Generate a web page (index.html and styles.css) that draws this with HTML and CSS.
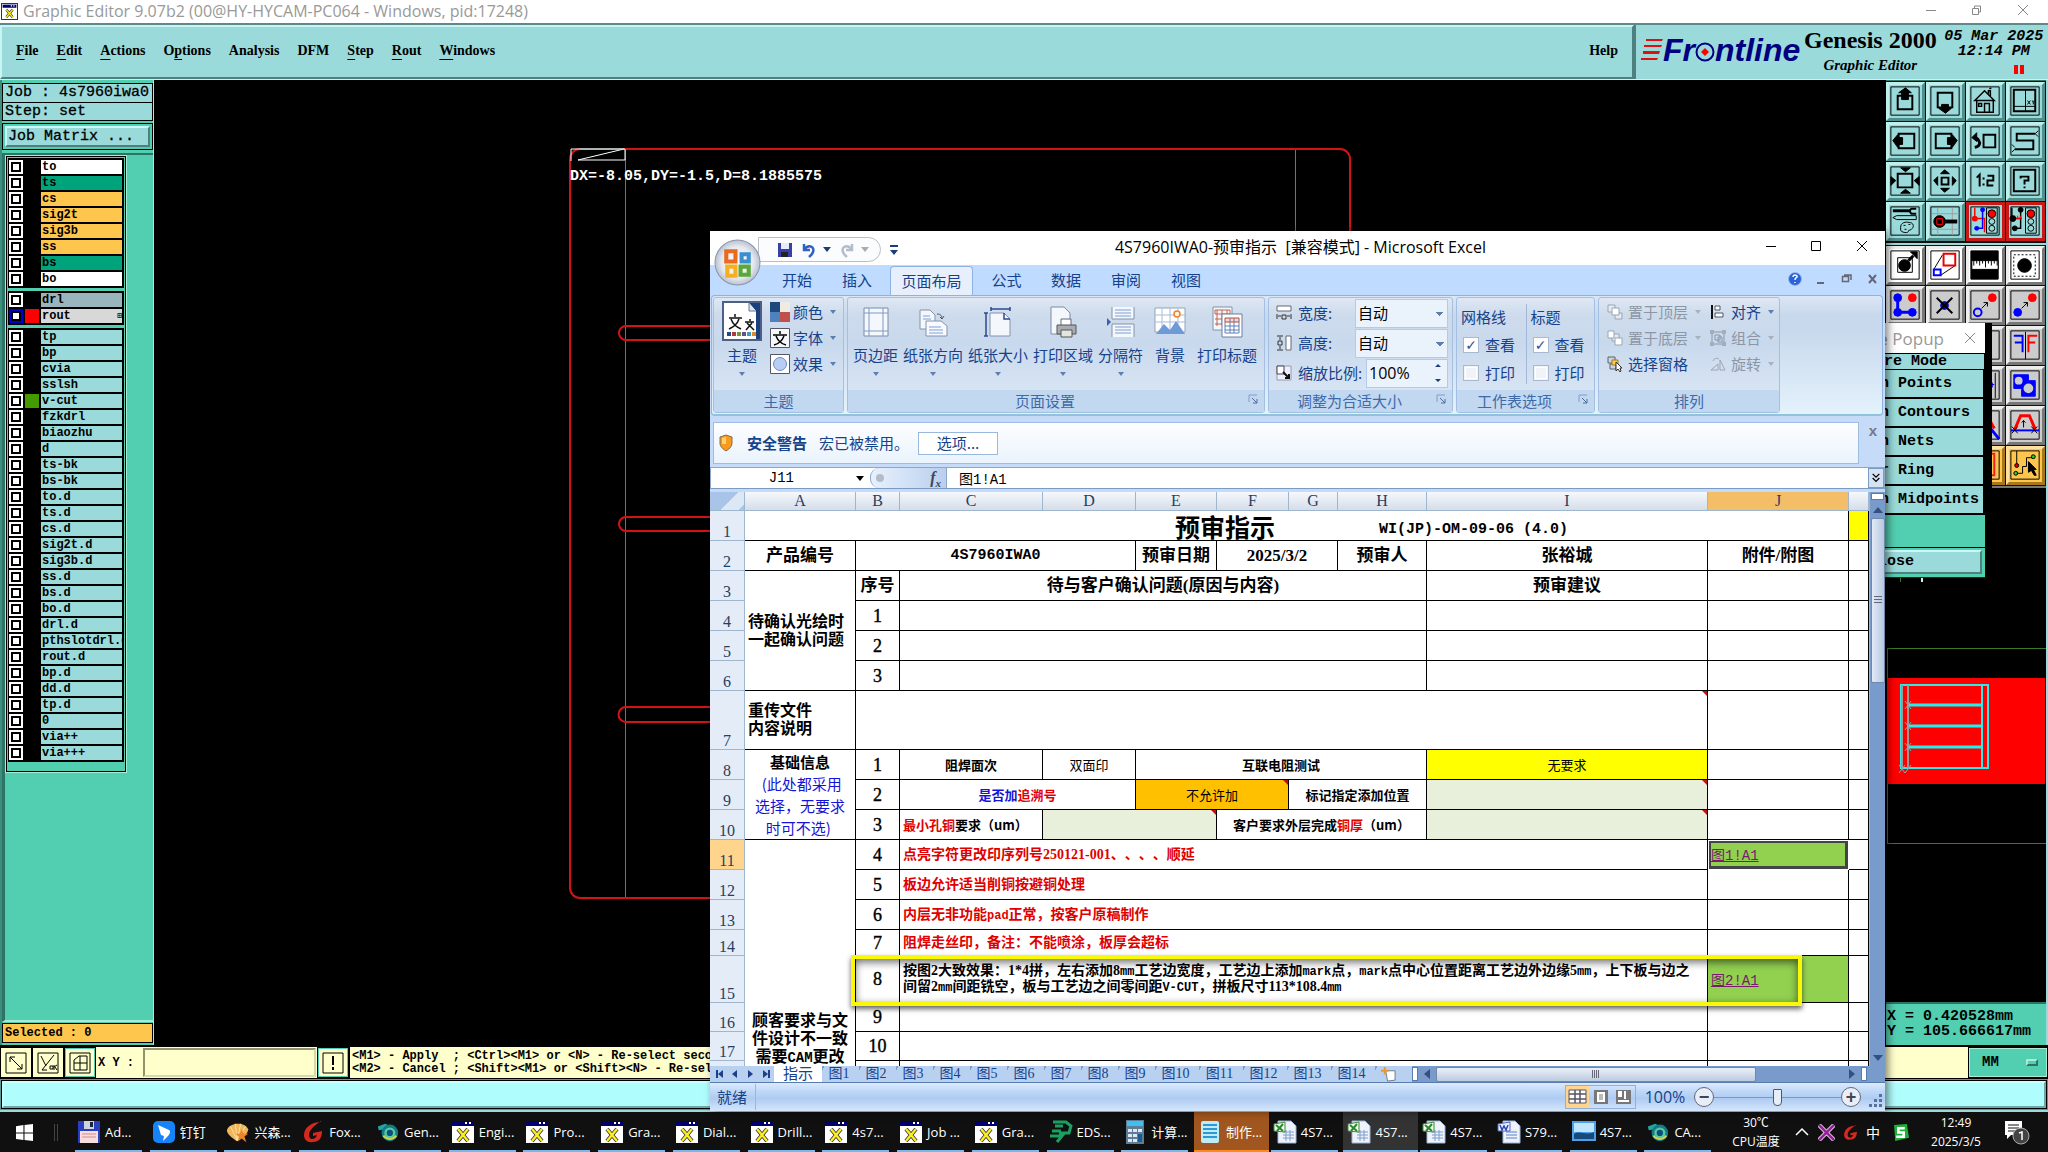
FILE: index.html
```html
<!DOCTYPE html>
<html lang="zh-CN">
<head>
<meta charset="utf-8">
<title>Graphic Editor</title>
<link rel="stylesheet" href="styles.css">
</head>
<body>
<svg class="defs" aria-hidden="true">
  <symbol id="xapp" viewBox="0 0 24 24"><path d="M1 1h22v22H1z" fill="#fff"/><path d="M1 1h22v5H1z" fill="#00006e"/><path d="M14 3h2M18 3h2" stroke="#fff" stroke-width="2"/><path d="M7 9l10 12M17 9L7 21" stroke="#333" stroke-width="4"/><path d="M7 9l10 12M17 9L7 21" stroke="#ffee22" stroke-width="2.4"/></symbol>
  <symbol id="xls" viewBox="0 0 24 24"><path d="M5 1h13l5 5v17H5z" fill="#eef3fb" stroke="#9fb4d6"/><path d="M10 12h11M10 15h11M10 18h11M13 10v11M17 10v11" stroke="#7f9cc8"/><path d="M1 4l11-2v10L1 11z" fill="#f3f8f0" stroke="#3b8a3b"/><path d="M3 5l7 6M10 4l-6 7" stroke="#2a8a2a" stroke-width="2"/></symbol>
  <symbol id="gen" viewBox="0 0 26 24"><path d="M2 6l8-3 4 2-3 4-8 1z" fill="#23a5a0"/><circle cx="15" cy="13" r="9" fill="#147a86"/><circle cx="15" cy="13" r="6" fill="#58c9a0"/><circle cx="15" cy="13" r="3.4" fill="#0b4f7c"/><path d="M8 16c4 5 10 5 14 0" stroke="#d7d04a" stroke-width="2" fill="none"/></symbol>
  <symbol id="fox" viewBox="0 0 24 24"><path d="M20 2C10 2 3 8 3 15c0 5 4 8 9 7 6 0 9-4 9-11l-9 2v3l4-1c-1 3-3 4-5 4-2 0-3-2-3-4 0-5 5-9 12-14z" fill="#d8281e"/></symbol>
  <symbol id="launch" viewBox="0 0 12 12"><path d="M1 8V1h8" fill="none" stroke="#7f9ec8"/><path d="M4 4l5 5M9 5v4H5" fill="none" stroke="#4d6c9c"/></symbol>
</svg>

<header class="titlebar">
  <svg class="tico"><use href="#xapp"/></svg>
  <span class="ttext">Graphic Editor 9.07b2 (00@HY-HYCAM-PC064 - Windows, pid:17248)</span>
  <svg class="wctl" width="110" height="23" fill="none" stroke="#888"><path d="M8 10.500h10M54.500 8.500h6v6h-6zM56.500 8v-2h6v6h-2M100 5l10 10M110 5l-10 10"/></svg>
</header>

<nav class="menubar">
  <div class="menus">
    <a href="#"><u>F</u>ile</a><a href="#"><u>E</u>dit</a><a href="#"><u>A</u>ctions</a><a href="#">O<u>p</u>tions</a><a href="#">Analysis</a><a href="#">DFM</a><a href="#"><u>S</u>tep</a><a href="#"><u>R</u>out</a><a href="#"><u>W</u>indows</a><a href="#" class="help">Help</a>
  </div>
  <div class="brand">
    <div class="logo">
      <svg width="22" height="26" fill="#e01010"><path d="M5 2h17l-1 2H5zM3 8h18l-1 2H3zM2 14h17l-1 3H2zM0 21h17l-1 2H0z"/></svg>
      <span>Fr</span><svg class="o" width="20" height="26"><circle cx="10" cy="15" r="8.500" fill="none" stroke="#000080" stroke-width="2"/><path d="M10 11l4 4-4 4-4-4z" fill="#f00"/></svg><span>ntline</span>
    </div>
    <div class="product"><b>Genesis 2000</b><i>Graphic Editor</i></div>
    <div class="date"><span>05 Mar 2025</span><span>12:14 PM</span><em></em></div>
  </div>
</nav>

<main class="work">
  <aside class="side">
    <div class="jobbox">
      <div class="jobline">Job : 4s7960iwa0</div>
      <div class="jobline">Step: set</div>
    </div>
    <div class="jobbtn"><button>Job Matrix ...</button></div>
    <div class="well">
      <div class="layers">
        <ul>
          <li><i></i><s></s><b class="w">to</b></li><li><i></i><s></s><b class="g">ts</b></li><li><i></i><s></s><b class="o">cs</b></li><li><i></i><s></s><b class="o">sig2t</b></li><li><i></i><s></s><b class="o">sig3b</b></li><li><i></i><s></s><b class="o">ss</b></li><li><i></i><s></s><b class="g">bs</b></li><li><i></i><s></s><b class="w">bo</b></li>
        </ul>
        <ul>
          <li><i></i><s></s><b class="d">drl</b></li><li><i class="on"></i><s class="red"></s><b class="l">rout<small>⊞</small></b></li>
        </ul>
        <ul>
          <li><i></i><s></s><b>tp</b></li><li><i></i><s></s><b>bp</b></li><li><i></i><s></s><b>cvia</b></li><li><i></i><s></s><b>sslsh</b></li><li><i></i><s class="grn"></s><b>v-cut</b></li><li><i></i><s></s><b>fzkdrl</b></li><li><i></i><s></s><b>biaozhu</b></li><li><i></i><s></s><b>d</b></li><li><i></i><s></s><b>ts-bk</b></li><li><i></i><s></s><b>bs-bk</b></li><li><i></i><s></s><b>to.d</b></li><li><i></i><s></s><b>ts.d</b></li><li><i></i><s></s><b>cs.d</b></li><li><i></i><s></s><b>sig2t.d</b></li><li><i></i><s></s><b>sig3b.d</b></li><li><i></i><s></s><b>ss.d</b></li><li><i></i><s></s><b>bs.d</b></li><li><i></i><s></s><b>bo.d</b></li><li><i></i><s></s><b>drl.d</b></li><li><i></i><s></s><b>pthslotdrl.d</b></li><li><i></i><s></s><b>rout.d</b></li><li><i></i><s></s><b>bp.d</b></li><li><i></i><s></s><b>dd.d</b></li><li><i></i><s></s><b>tp.d</b></li><li><i></i><s></s><b>0</b></li><li><i></i><s></s><b>via++</b></li><li><i></i><s></s><b>via+++</b></li>
        </ul>
      </div>
    </div>
    <div class="selected">Selected : 0</div>
  </aside>

  <svg class="canvas" fill="none">
    <path d="M471.500 69v749M1141.500 69v749" stroke="#4a9a1a"/>
    <rect x="416" y="69" width="780" height="749" rx="10" stroke="#d21414" stroke-width="2"/>
    <path d="M702 246H472a7 7 0 0 0 0 14h230M702 437H472a7 7 0 0 0 0 14h230M702 627H472a7 7 0 0 0 0 15h230" stroke="#d21414" stroke-width="2"/>
    <path d="M417 81V69h54v11h-47l46-11" stroke="#fff"/><path d="M426 69h44" stroke="#6fdede"/>
    <text x="416" y="100">DX=-8.05,DY=-1.5,D=8.1885575</text>
  </svg>

  <aside class="right">
    <div class="tools teal">
      <button><svg viewBox="0 0 40 40"><path d="M5 5h29v29H5z"/><path d="M12 14h15v14H12z" stroke-width="2"/><path d="M20 6l6 5h-3v7h-7v-7h-3z" fill="#000"/></svg></button>
      <button><svg viewBox="0 0 40 40"><path d="M5 5h29v29H5z"/><path d="M12 11h15v15H12z" stroke-width="2"/><path d="M20 32l6-5h-3v-4h-7v4h-3z" fill="#000"/></svg></button>
      <button><svg viewBox="0 0 40 40"><path d="M5 5h29v29H5z"/><path d="M9 19L19 9l10 10zM11 19h17v12H11zM19 31v-9h5v9M13 22h3v3h-3zM23 12V9h2v6M24 7l2-1" stroke-width="1.500"/></svg></button>
      <button><svg viewBox="0 0 40 40"><path d="M5 5h29v29H5z"/><path d="M8 8h22v22H8z" stroke-width="2"/><path d="M20 8v22M8 25h22M22 19l3 4M25 19l-3 4M27 19l1 2 1-2M28 21v2"/></svg></button>
      <button><svg viewBox="0 0 40 40"><path d="M5 5h29v29H5z"/><path d="M13 12h16v15H13z" stroke-width="2"/><path d="M7 19l5-6v3h5v7h-5v3z" fill="#000"/></svg></button>
      <button><svg viewBox="0 0 40 40"><path d="M5 5h29v29H5z"/><path d="M10 12h16v15H10z" stroke-width="2"/><path d="M32 19l-5-6v3h-5v7h5v3z" fill="#000"/></svg></button>
      <button><svg viewBox="0 0 40 40"><path d="M5 5h29v29H5z"/><path d="M18 13h12v13H18z" stroke-width="2"/><path d="M9 26c5-1 6-4 4-7-1-2-2-3-4-3" stroke-width="3"/><path d="M6 16l5-5v9z" fill="#000"/></svg></button>
      <button><svg viewBox="0 0 40 40"><path d="M5 5h29v29H5z"/><path d="M30 12H11v7h17v9H9" stroke-width="2"/><path d="M30 12l3-3M30 12l3 3M9 26l-3-3M9 28l-3 3"/></svg></button>
      <button><svg viewBox="0 0 40 40"><path d="M5 5h29v29H5z"/><path d="M12 12h15v14H12z" stroke-width="2"/><path d="M20 10l-5-4h10zM20 28l-5 4h10zM10 19l-5-4v9zM29 19l5-4v9z" fill="#000"/></svg></button>
      <button><svg viewBox="0 0 40 40"><path d="M5 5h29v29H5z"/><path d="M16 16h7v7h-7z" stroke-width="2"/><path d="M19 8l-4 4h9zM19 31l-4-4h9zM8 19l4-4v9zM31 19l-4-4v9z" fill="#000"/></svg></button>
      <button><svg viewBox="0 0 40 40"><path d="M5 5h29v29H5z"/><path d="M11 16l3-3v12M18 16v2M18 22v2M22 14h6v5h-6v5h6" stroke-width="2"/></svg></button>
      <button><svg viewBox="0 0 40 40"><path d="M5 5h29v29H5z"/><path d="M8 8h22v22H8z" stroke-width="2"/><path d="M15 17v-2h8v4h-4v4M19 25v2" stroke-width="2"/></svg></button>
      <button><svg viewBox="0 0 40 40"><path d="M5 5h29v29H5z"/><path d="M7 9h18" stroke-width="3"/><path d="M31 7h-5l-2 2 2 3h5" stroke-width="2"/><path d="M7 16l4-2h20v4H11zM15 26c0-5 5-6 9-5 4 0 5 4 3 6-2 3-4 1-4 3s-6 2-8-1zM18 24h2M23 23h2M19 28h2"/></svg></button>
      <button><svg viewBox="0 0 40 40"><path d="M5 5h29v29H5z"/><path d="M12 6v28M27 6v28M6 12h28M6 28h28" stroke="#aa9a9a"/><circle cx="14" cy="20" r="6" fill="#000"/><path d="M20 20h12" stroke-width="4"/><path d="M11 17h6v6h-6z" stroke="#f00"/></svg></button>
      <button class="redb"><svg viewBox="0 0 40 40"><path d="M5 5h29v29H5z"/><path d="M9 6v11M10 17h9v14" stroke="#f00" stroke-width="1.500"/><path d="M17 8v19h-6" stroke="#00f" stroke-width="1.500"/><circle cx="9" cy="17" r="3" fill="#f00" stroke="none"/><circle cx="17" cy="8" r="2.500" fill="#00f" stroke="none"/><circle cx="11" cy="27" r="2.500" fill="#00f" stroke="none"/><path d="M21 6h11v26H21z"/><circle cx="26.500" cy="12" r="4" fill="#f00"/><circle cx="26.500" cy="20" r="3"/><circle cx="26.500" cy="27" r="3"/></svg></button>
      <button class="redb"><svg viewBox="0 0 40 40"><path d="M5 5h29v29H5z"/><path d="M6 6v11M7 17h9M15 8v19h-6" stroke-width="1.500"/><path d="M9 17v-3M12 17v-3M15 17v-3M9 17h6" stroke="#f00"/><circle cx="7" cy="17" r="3" fill="#000"/><circle cx="15" cy="8" r="2.500" fill="#000"/><circle cx="9" cy="27" r="2.500" fill="#000"/><path d="M20 6h11v26H20z"/><circle cx="25.500" cy="12" r="4" fill="#f00"/><circle cx="25.500" cy="20" r="3"/><circle cx="25.500" cy="27" r="3"/></svg></button>
    </div>
    <div class="tools gray">
      <button class="wt"><svg viewBox="0 0 40 40"><path d="M5 5h29v29H5z"/><path d="M12 12h15v15H12z"/><circle cx="19" cy="20" r="6" fill="#000"/><path d="M23 15l5-5" stroke-width="3"/><path d="M32 6v7l-7-7z" fill="#000"/></svg></button>
      <button class="wt"><svg viewBox="0 0 40 40"><path d="M5 5h29v29H5z"/><path d="M17 9L8 24M30 20l-15 10"/><path d="M18 8h12v12H18z" stroke="#e00" stroke-width="2"/><path d="M8 24h7v6H8z" stroke="#00f" stroke-width="2"/></svg></button>
      <button class="wt"><svg viewBox="0 0 40 40"><path d="M5 5h28v29H5z" fill="#000"/><path d="M6 15h27v9H6z" fill="#fff"/><path d="M8 15v5M11 15v3M14 15v5M17 15v3M20 15v7M23 15v3M26 15v5M29 15v3M32 15v5"/></svg></button>
      <button class="wt"><svg viewBox="0 0 40 40"><path d="M5 5h29v29H5z"/><path d="M8 9h22v22H8z" stroke-dasharray="2 2"/><circle cx="19" cy="20" r="7" fill="#000"/></svg></button>
      <button><svg viewBox="0 0 40 40"><path d="M5 5h29v29H5z"/><g fill="#00f" stroke="#00f"><circle cx="12" cy="12" r="4"/><circle cx="12" cy="27" r="4"/><circle cx="27" cy="27" r="4"/><path d="M12 12v15h15" fill="none" stroke-width="3"/></g><circle cx="27" cy="12" r="4" fill="#f00" stroke="#f00"/></svg></button>
      <button><svg viewBox="0 0 40 40"><path d="M5 5h29v29H5z"/><circle cx="19" cy="20" r="4" fill="#00c" stroke="#00c"/><path d="M11 12l16 16M27 12L11 28" stroke-width="2"/></svg></button>
      <button><svg viewBox="0 0 40 40"><path d="M5 5h29v29H5z"/><circle cx="27" cy="12" r="4" fill="#f00" stroke="#f00"/><circle cx="12" cy="27" r="4" stroke="#00f" stroke-width="2"/><path d="M16 23l6-6M18 17h4v4"/></svg></button>
      <button><svg viewBox="0 0 40 40"><path d="M5 5h29v29H5z"/><circle cx="27" cy="12" r="4" fill="#f00" stroke="#f00"/><circle cx="12" cy="27" r="4" fill="#00f" stroke="#00f"/><path d="M16 23l6-6M18 17h4v4"/></svg></button>
      <button></button><button></button><button><svg viewBox="0 0 40 40"><path d="M5 5h29v29H5z"/></svg></button>
      <button><svg viewBox="0 0 40 40"><path d="M5 5h29v29H5zM20 6v28"/><path d="M8 10h9v17M9 17h7" stroke="#00f" stroke-width="2"/><path d="M32 10h-9v17M23 17h7" stroke="#f00" stroke-width="2"/></svg></button>
      <button></button><button></button><button><svg viewBox="0 0 40 40"><path d="M5 5h29v29H5z"/><path d="M30 7v26"/><path d="M24 19h5M27 17v5" stroke="#00f"/></svg></button>
      <button><svg viewBox="0 0 40 40"><path d="M5 5h29v29H5z"/><path d="M8 9h15v6h7v16H16v-8H8z" fill="#00f" stroke="#00f"/><circle cx="13" cy="15" r="4" fill="#ccc" stroke="none"/><circle cx="23" cy="23" r="5" fill="#ccc" stroke="none"/></svg></button>
      <button></button><button></button><button><svg viewBox="0 0 40 40"><path d="M5 5h29v29H5z"/><path d="M24 14l5 9" stroke="#f00" stroke-width="3"/><path d="M26 24l8 10" stroke="#00f" stroke-width="3"/></svg></button>
      <button><svg viewBox="0 0 40 40"><path d="M5 5h29v29H5z"/><path d="M5 25h29" stroke="#00f" stroke-width="2"/><path d="M9 24l6-14h9l6 14" stroke="#f00" stroke-width="3"/><path d="M18 22v-7M16 17l2-2 2 2M6 21l6 7M12 21l-6 7M26 21l6 7M32 21l-6 7"/></svg></button>
      <button class="or"></button><button class="or"></button><button class="or"><svg viewBox="0 0 40 40"><path d="M5 5h29v29H5z"/><path d="M20 8h9v22h-9" stroke="#e22" stroke-width="2"/></svg></button>
      <button class="or"><svg viewBox="0 0 40 40"><path d="M5 5h29v29H5z"/><path d="M11 5v15M11 28h6v-7h4v-9h7"/><circle cx="11" cy="20" r="2" fill="#d00"/><circle cx="28" cy="11" r="2" fill="#2c2"/><circle cx="10" cy="28" r="2" fill="#2c2"/><path d="M23 16l8 8-3 0 3 6-2 0-3-5-3 2z" fill="#000"/></svg></button>
    </div>
    <svg class="mini" fill="none">
      <path d="M14.500 80v14M1 160.500h159M1.500 160v195M1 355.500h159" stroke="#3c7a22"/><path d="M36 80v14" stroke="#bfe" stroke-width="2"/>
      <path d="M1 190h158v106H1z" fill="#f00"/>
      <path d="M15 197h87v83H15zM96 197v83" stroke="#33e8e8" stroke-width="2"/><path d="M22 217h73M22 238h73M22 259h73" stroke="#19f3f3" stroke-width="3"/>
      <path d="M16 197v83M22 197v83" stroke="#999" stroke-width="2"/><path d="M19 213l6 8M25 213l-6 8M19 234l6 8M25 234l-6 8M19 255l6 8M25 255l-6 8M13 277l6 8M19 277l-6 8M25 277l-6 8" stroke="#8aa"/>
    </svg>
    <div class="coords">X = 0.420528mm<br>Y = 105.666617mm</div>
  </aside>
</main>

<section class="cmdbar">
  <button class="c1"><svg viewBox="0 0 22 22"><path d="M1 1h20v20H1zM5 5l12 12M5 10V5h5M12 17h5v-5"/></svg></button>
  <button class="c1"><svg viewBox="0 0 22 22"><path d="M1 1h20v20H1zM4 4l5 10M17 3L5 18h5M13 14h3v3h-3zM17 13v5M17 15l3-2M18 15l2 3"/></svg></button>
  <button class="c1 gr"><svg viewBox="0 0 22 22"><path d="M1 1h20v20H1zM5 8l5-4h8v14H5zM5 11h13M11 4v14"/></svg></button>
  <label class="xy" for="xy">X Y :</label>
  <input id="xy" class="xyin" type="text">
  <button class="c1 gr"><svg viewBox="0 0 22 22"><path d="M1 1h20v20H1z"/><path d="M11 4v9M11 15v3" stroke-width="2"/></svg></button>
  <div class="msg">&lt;M1&gt; - Apply&nbsp; ; &lt;Ctrl&gt;&lt;M1&gt; or &lt;N&gt; - Re-select secon<br>&lt;M2&gt; - Cancel ; &lt;Shift&gt;&lt;M1&gt; or &lt;Shift&gt;&lt;N&gt; - Re-sele</div>
  <button class="mm">MM<i></i></button>
</section>
<section class="statusline"><div></div></section>

<section class="popup">
  <header><span>Measure Popup</span><svg width="12" height="12" stroke="#888"><path d="M1 1l10 10M11 1L1 11"/></svg></header>
  <h4>re Mode</h4>
  <button>n Points</button><button>n Contours</button><button>n Nets</button><button>r Ring</button><button>n Midpoints</button>
  <div class="pfoot"><button>Close</button></div>
</section>

<section class="excel">
  <div class="etitle">
    <div class="orb"><svg viewBox="0 0 46 46"><defs><radialGradient id="og"><stop offset="0" stop-color="#fff"/><stop offset=".7" stop-color="#e6e9ef"/><stop offset="1" stop-color="#b9c2d2"/></radialGradient></defs><circle cx="23" cy="23" r="22" fill="url(#og)" stroke="#8a94a8"/><g fill="none" stroke-width="4"><path d="M12 12h9v10h-9z" stroke="#ea6a1e"/><path d="M27 15h7v7h-7z" stroke="#3a8fd0"/><path d="M13 27h8v9h-8z" stroke="#f5b022"/><path d="M26 27h8v8h-8z" stroke="#5aa83a"/></g></svg></div>
    <div class="qat">
      <svg viewBox="0 0 16 16" width="16" height="16"><path d="M1 1h14v14H1z" fill="#3a3fa8"/><path d="M4 1h8v6H4z" fill="#e8ecf8"/><path d="M4 10h7v5H4z" fill="#222"/></svg>
      <svg viewBox="0 0 16 16" width="16" height="16"><path d="M3 2v6h6M3 8c4-6 11-4 9 2-1 3-3 4-4 5" fill="none" stroke="#2f62c4" stroke-width="2.500"/></svg><i></i>
      <svg viewBox="0 0 16 16" width="16" height="16"><path d="M13 2v6H7M13 8C9 2 2 4 4 10c1 3 3 4 4 5" fill="none" stroke="#b4bdcc" stroke-width="2.500"/></svg><i class="dim"></i>
    </div>
    <svg class="more" width="8" height="12" fill="#1c3d78"><path d="M0 1h8v2H0zM0 6h8l-4 5z"/></svg>
    <span class="etext">4S7960IWA0-预审指示&nbsp; [兼容模式] - Microsoft Excel</span>
    <svg class="ectl" width="104" height="14" fill="none" stroke="#000"><path d="M1 7.500h10M46.500 2.500h9v9h-9zM92 2l10 10M102 2L92 12"/></svg>
  </div>
  <div class="etabs">
    <button>开始</button><button>插入</button><button class="act">页面布局</button><button>公式</button><button>数据</button><button>审阅</button><button>视图</button>
    <svg width="90" height="16" fill="none" stroke="#667"><circle cx="8" cy="8" r="6.500" fill="#2a62d8" stroke="#9db8e8"/><path d="M6 6c0-3 5-2 4 0-1 1-2 1-2 3M8 11v1" stroke="#fff" stroke-width="1.500"/><path d="M30 12h7" stroke-width="2"/><path d="M55.500 5.500h6v5h-6zM57 4h7v5" stroke-width="1.500"/><path d="M82 4l7 8M89 4l-7 8" stroke-width="2"/></svg>
  </div>
  <div class="ribbon">
    <div class="grp g1">
      <div class="gb">
        <button class="big"><svg viewBox="0 0 40 40"><path d="M1 1h38v38H1z" fill="#fff" stroke="#4c5f86" stroke-width="2"/><path d="M27 2h11v36h-4V10z" fill="#1c3f7e"/><path d="M27 2v8h7" fill="#dde6f2" stroke="#678"/><path d="M13 13v3M7 17h13M9 18c2 6 6 8 10 10M17 18c-2 6-6 8-10 10M28 18v2M23 21h9M25 22l7 7M30 22l-6 7" stroke="#111" stroke-width="1.500" fill="none"/><path d="M5 31h4v4H5z" fill="#204a88"/><path d="M10 31h4v4h-4z" fill="#b23a3a"/><path d="M15 31h4v4h-4z" fill="#6c9a3a"/><path d="M20 31h4v4h-4z" fill="#6b4a9a"/><path d="M25 31h4v4h-4z" fill="#3aa0c0"/><path d="M30 31h4v4h-4z" fill="#e08a2a"/></svg>主题<i></i></button>
        <div class="smalls">
          <button><svg viewBox="0 0 20 20"><path d="M0 0h10v10H0z" fill="#1f497d"/><path d="M10 0h10v10H10z" fill="#eeece1"/><path d="M0 10h10v10H0z" fill="#4f81bd"/><path d="M10 10h10v10H10z" fill="#c0504d"/></svg>颜色<i></i></button>
          <button><svg viewBox="0 0 20 20"><path d="M.500.500h19v19H.500z" fill="#f5f7fb" stroke="#556"/><path d="M10 3v3M3 7h14M6 8c2 5 6 8 10 9M14 8c-2 5-6 8-10 9" stroke="#000" fill="none" stroke-width="1.500"/></svg>字体<i></i></button>
          <button><svg viewBox="0 0 20 20"><path d="M.500.500h19v19H.500z" fill="#fff" stroke="#556"/><circle cx="10" cy="10" r="6.500" fill="#b8cdf4" stroke="#6c8cc4"/></svg>效果<i></i></button>
        </div>
      </div>
      <div class="cap">主题</div>
    </div>
    <div class="grp g2">
      <div class="gb">
        <button class="big"><svg class="m" viewBox="0 0 32 32"><path d="M4 2h24v28H4z" fill="#f4f7fc" stroke="#7d8ca6"/><path d="M9 2v28M23 2v28M4 7h24M4 25h24" stroke="#7d9ac6"/></svg>页边距<i></i></button>
        <button class="big"><svg class="m" viewBox="0 0 32 32"><path d="M3 4h10l5 5v14H3z" fill="#f4f7fc" stroke="#8492ac"/><path d="M9 15h15l6 5v10H9z" fill="#f8faff" stroke="#8492ac"/><path d="M12 21h12M12 24h14M12 27h14M6 10h7M6 13h8" stroke="#7da0d4"/><path d="M20 8c4 0 5 2 5 5M23 11l2 2 2-3" fill="none" stroke="#556"/></svg>纸张方向<i></i></button>
        <button class="big"><svg class="m" viewBox="0 0 32 32"><path d="M8 7h14l6 6v17H8z" fill="#f4f7fc" stroke="#8492ac"/><path d="M22 7v6h6M9 3h19M9 1v4M28 1v4M4 7v23M2 7h4M2 30h4" fill="none" stroke="#2b4a94" stroke-width="1.500"/></svg>纸张大小<i></i></button>
        <button class="big"><svg class="m" viewBox="0 0 32 32"><path d="M4 1h13l6 6v21H4z" fill="#f4f7fc" stroke="#7d8ca6"/><path d="M14 13h10v9H14z" fill="#fff" stroke="#667"/><path d="M10 19h19v9H10z" fill="#a8acb2" stroke="#555"/><path d="M14 24h11v7H14z" fill="#e4e4e0" stroke="#555"/></svg>打印区域<i></i></button>
        <button class="big"><svg class="m" viewBox="0 0 32 32"><path d="M7 1v12h22V1M7 31V18h22v13" fill="#f4f7fc" stroke="#8492ac"/><path d="M10 4h16M10 7h16M10 10h16M10 21h16M10 24h16M10 27h16" stroke="#7da0d4"/><path d="M2 12l4 4-4 4z" fill="#3a5fb0"/></svg>分隔符<i></i></button>
        <button class="big narrow"><svg class="m" viewBox="0 0 32 32"><path d="M1 2h30v24H1z" fill="#fff" stroke="#93a3bf"/><path d="M8 2v24M16 2v24M24 2v24M1 9h30M1 16h30" stroke="#a8bbd8"/><path d="M2 28l8-10 6 6 6-9 9 13z" fill="#6f9ad8"/><circle cx="23" cy="8" r="3" fill="#fff3d0" stroke="#e8823a" stroke-width="1.500"/></svg>背景</button>
        <button class="big"><svg class="m" viewBox="0 0 32 32"><path d="M2 1h19v23H2z" fill="#f4f7fc" stroke="#8492ac"/><path d="M4 4h15v4H4zM6 4v16M11 4v16M16 4v16M4 13h15M4 18h15" stroke="#c0644e" fill="none"/><path d="M11 8h20v23H11z" fill="#fff" stroke="#6c7ea0"/><path d="M14 12h14v4H14z" fill="#f7d8d0" stroke="#c2472c"/><path d="M14 16v11h14V16M14 20h14M14 24h14M19 12v15M23 12v15" stroke="#5d7fb8" fill="none"/></svg>打印标题</button>
      </div>
      <div class="cap lc">页面设置<svg class="ln"><use href="#launch"/></svg></div>
    </div>
    <div class="grp g3">
      <div class="gb rows">
        <div class="fr"><svg viewBox="0 0 16 16"><path d="M1 1h14v5H1z" fill="#fff" stroke="#667"/><path d="M1 9v5M15 9v5M2 11h3M11 11h3M6 10h4v4H6z" stroke="#333" fill="none"/></svg><label for="sw">宽度:</label><select id="sw"><option>自动</option></select></div>
        <div class="fr"><svg viewBox="0 0 16 16"><path d="M10 1h5v14h-5z" fill="#fff" stroke="#667"/><path d="M1 1h6M1 15h6M4 2v3M4 11v3M2 6h4v4H2z" stroke="#333" fill="none"/></svg><label for="sh">高度:</label><select id="sh"><option>自动</option></select></div>
        <div class="fr"><svg viewBox="0 0 16 16"><path d="M1 1h14v14H1z" fill="#eef" stroke="#99a"/><path d="M1 1h7v8H1z" fill="#fff" stroke="#445"/><path d="M7 7l6 6M13 9v4H9" stroke="#111" stroke-width="2" fill="none"/></svg><label for="sc">缩放比例:</label><div class="spin"><input id="sc" type="text" value="100%"><svg viewBox="0 0 8 20" fill="#1f3f7a"><path d="M0 4l3-3 3 3zM0 16l3 3 3-3z"/></svg></div></div>
      </div>
      <div class="cap lc">调整为合适大小<svg class="ln"><use href="#launch"/></svg></div>
    </div>
    <div class="grp g4">
      <div class="gb">
        <div class="ck"><span>网格线</span><label><input type="checkbox" checked>查看</label><label><input type="checkbox">打印</label></div>
        <div class="ck sep"><span>标题</span><label><input type="checkbox" checked>查看</label><label><input type="checkbox">打印</label></div>
      </div>
      <div class="cap lc">工作表选项<svg class="ln"><use href="#launch"/></svg></div>
    </div>
    <div class="grp g5">
      <div class="gb">
        <div class="smalls tight">
          <button disabled><svg viewBox="0 0 16 16"><path d="M1 1h7v7H1zM8 9h7v6H8z" fill="#e6ebf2" stroke="#9aa5b5"/><path d="M5 4h7v7H5z" fill="#fff" stroke="#9aa5b5"/></svg>置于顶层<i></i></button>
          <button disabled><svg viewBox="0 0 16 16"><path d="M5 4h7v7H5z" fill="#e6ebf2" stroke="#9aa5b5"/><path d="M1 1h6v7H1zM8 8h7v7H8z" fill="#fff" stroke="#9aa5b5"/></svg>置于底层<i></i></button>
          <button><svg viewBox="0 0 16 16"><path d="M1 1h7v6H1zM3 8h6v5H3z" fill="#ccd4e0" stroke="#566"/><path d="M5 4h6v5H5z" fill="#ffc95a" stroke="#a67a1a"/><path d="M9 6v9l2-2 2 3 1-1-1-3h2z" fill="#fff" stroke="#333"/></svg>选择窗格</button>
        </div>
        <div class="smalls tight">
          <button><svg viewBox="0 0 16 16"><path d="M2 1v14" stroke="#111" stroke-width="2"/><path d="M5 2h5v4H5zM5 9h8v4H5z" fill="#fff" stroke="#556"/></svg>对齐<i></i></button>
          <button disabled><svg viewBox="0 0 16 16"><path d="M2 2h12v12H2zM5 5h5v5H5zM8 7h4v5H8z" fill="none" stroke="#8a96a8"/><path d="M0 0h4v4H0zM12 0h4v4h-4zM0 12h4v4H0zM12 12h4v4h-4z" fill="#a2adbd"/></svg>组合<i></i></button>
          <button disabled><svg viewBox="0 0 16 16"><path d="M1 14h7V8zM10 14V4l5 10z" fill="#d8dfe9" stroke="#9aa5b5"/><path d="M3 5c1-3 4-3 6-2" fill="none" stroke="#9aa5b5"/></svg>旋转<i></i></button>
        </div>
      </div>
      <div class="cap">排列</div>
    </div>
  </div>
  <div class="secwrap">
    <div class="sec"><svg viewBox="0 0 14 18"><path d="M7 1l6 2v6c0 4-3 6-6 8-3-2-6-4-6-8V3z" fill="#f79a1e" stroke="#8a6a4a"/><path d="M3 4l4-1v7H3z" fill="#ffd36a"/></svg><b>安全警告</b><span>宏已被禁用。</span><button>选项...</button></div>
    <button class="x">x</button>
  </div>
  <div class="fbar">
    <div class="name">J11<i></i></div>
    <div class="fx"><i></i><em>f<sub>x</sub></em></div>
    <input class="fin" type="text" value="图1!A1" aria-label="编辑栏">
    <button class="exp"><svg viewBox="0 0 12 14" fill="none" stroke="#000" stroke-width="1.500"><path d="M2 2l4 4 4-4M2 7l4 4 4-4"/></svg></button>
  </div>
  <div class="gridwrap">
    <div class="gridclip">
      <table class="sheet">
        <colgroup><col class="k0"><col class="kA"><col class="kB"><col class="kC"><col class="kD"><col class="kE"><col class="kF"><col class="kG"><col class="kH"><col><col class="kJ"><col class="kK"></colgroup>
        <thead><tr><th class="corner"></th><th>A</th><th>B</th><th>C</th><th>D</th><th>E</th><th>F</th><th>G</th><th>H</th><th>I</th><th class="hot">J</th><th></th></tr></thead>
        <tbody>
        <tr><th>1</th><td colspan="10"><div class="ttl"><b>预审指示</b><span>WI(JP)-OM-09-06 (4.0)</span></div></td><td class="yel"></td></tr>
        <tr class="f17"><th>2</th><td>产品编号</td><td colspan="3" class="mono">4S7960IWA0</td><td>预审日期</td><td colspan="2">2025/3/2</td><td>预审人</td><td>张裕城</td><td>附件/附图</td><td></td></tr>
        <tr class="f17"><th>3</th><td rowspan="4" class="sa">待确认光绘时<br>一起确认问题</td><td>序号</td><td colspan="6">待与客户确认问题(原因与内容)</td><td>预审建议</td><td></td><td></td></tr>
        <tr><th>4</th><td class="n">1</td><td colspan="6"></td><td></td><td></td><td></td></tr>
        <tr><th>5</th><td class="n">2</td><td colspan="6"></td><td></td><td></td><td></td></tr>
        <tr><th>6</th><td class="n">3</td><td colspan="6"></td><td></td><td></td><td></td></tr>
        <tr class="h59"><th>7</th><td class="sa">重传文件<br>内容说明</td><td colspan="8" class="note"></td><td></td><td></td></tr>
        <tr class="f13"><th>8</th><td rowspan="3" class="sb"><b>基础信息</b><br>&nbsp;(此处都采用<br>选择，无要求<br>时可不选)&nbsp;</td><td class="n">1</td><td class="b">阻焊面次</td><td>双面印</td><td colspan="4" class="b">互联电阻测试</td><td class="yel">无要求</td><td></td><td></td></tr>
        <tr class="f13"><th>9</th><td class="n">2</td><td colspan="2" class="b"><span class="bl">是否加</span><span class="rd">追溯号</span></td><td colspan="2" class="amb note">不允许加</td><td colspan="2" class="b">标记指定添加位置</td><td class="pale note"></td><td></td><td></td></tr>
        <tr class="f13"><th>10</th><td class="n">3</td><td class="b left"><span class="rd">最小孔铜</span>要求（um）</td><td colspan="2" class="pale note"></td><td colspan="3" class="b">客户要求外层完成<span class="rd">铜厚</span>（um）</td><td class="pale note"></td><td></td><td></td></tr>
        <tr class="f14"><th class="hot">11</th><td rowspan="8" class="sc">顾客要求与文<br>件设计不一致<br>需要<kbd>CAM</kbd>更改</td><td class="n">4</td><td colspan="7" class="left rd">点亮字符更改印序列号250121-001、、、、顺延</td><td class="lnk sel"><a href="#">图1!A1</a></td><td></td></tr>
        <tr class="f14"><th>12</th><td class="n">5</td><td colspan="7" class="left rd">板边允许适当削铜按避铜处理</td><td></td><td></td></tr>
        <tr class="f14"><th>13</th><td class="n">6</td><td colspan="7" class="left rd">内层无非功能<kbd>pad</kbd>正常，按客户原稿制作</td><td></td><td></td></tr>
        <tr class="f14 h26"><th>14</th><td class="n">7</td><td colspan="7" class="left rd">阻焊走丝印，备注：不能喷涂，板厚会超标</td><td></td><td></td></tr>
        <tr class="f14 h47"><th>15</th><td class="n">8</td><td colspan="7" class="left two">按图2大致效果：1*4拼，左右添加8<kbd>mm</kbd>工艺边宽度，工艺边上添加<kbd>mark</kbd>点，<kbd>mark</kbd>点中心位置距离工艺边外边缘5<kbd>mm</kbd>，上下板与边之<br>间留2<kbd>mm</kbd>间距铣空，板与工艺边之间零间距<kbd>V-CUT</kbd>，拼板尺寸113*108.4<kbd>mm</kbd></td><td class="lnk"><a href="#">图2!A1</a></td><td></td></tr>
        <tr class="h29"><th>16</th><td class="n">9</td><td colspan="7"></td><td></td><td></td></tr>
        <tr class="h29"><th>17</th><td class="n">10</td><td colspan="7"></td><td></td><td></td></tr>
        <tr class="h29"><th></th><td class="n"></td><td colspan="7"></td><td></td><td></td></tr>
        </tbody>
      </table>
      <div class="mark"></div>
    </div>
    <div class="vs"><i class="split"></i><svg viewBox="0 0 10 6"><path d="M0 6l5-6 5 6z"/></svg><div class="vth"></div><svg class="dn" viewBox="0 0 10 6"><path d="M0 0l5 6 5-6z"/></svg></div>
  </div>
  <div class="sheets">
    <svg class="nav" width="56" height="12" fill="#1f3f8a"><path d="M1 2h2v8H1zM8 2v8L3 6zM22 2v8l-5-4zM33 2v8l5-4zM48 2v8l5-4zM53 2h2v8h-2z"/></svg>
    <button class="cur">指示</button><button>图1</button><button>图2</button><button>图3</button><button>图4</button><button>图5</button><button>图6</button><button>图7</button><button>图8</button><button>图9</button><button class="w2">图10</button><button class="w2">图11</button><button class="w2">图12</button><button class="w2">图13</button><button class="w2">图14</button><button class="new"><svg viewBox="0 0 16 16"><path d="M5 4h10v10l-8 1z" fill="#fff" stroke="#678"/><path d="M4 0v8M0 4h8" stroke="#f0962a" stroke-width="2"/></svg></button>
    <div class="hs"><i></i><svg viewBox="0 0 6 10"><path d="M6 0v10L0 5z"/></svg><div class="hth"></div><svg viewBox="0 0 6 10"><path d="M0 0v10l6-5z"/></svg><i></i></div>
  </div>
  <div class="estatus">
    <span class="rdy">就绪</span>
    <div class="views">
      <button class="on"><svg viewBox="0 0 20 16"><path d="M1 1h17v13H1z" fill="#fff" stroke="#556"/><path d="M1 5h17M1 10h17M7 1v13M12 1v13" stroke="#556" stroke-width="1.500"/></svg></button><button><svg viewBox="0 0 20 16"><path d="M3 1h14v14H3z" fill="#777"/><path d="M6 3h8v10H6z" fill="#fff"/><path d="M8 6h4M8 8h4M8 10h4" stroke="#777"/></svg></button><button><svg viewBox="0 0 20 16"><path d="M2 1h15v14H2z" fill="#777"/><path d="M4 2h4v6H4zM10 2h2v8h-2zM4 11h11v2H4z" fill="#fff"/></svg></button>
    </div>
    <span class="pct">100%</span>
    <button class="rnd">−</button><input type="range" min="0" max="100" value="50" aria-label="缩放"><button class="rnd">+</button>
    <svg class="gripper" width="14" height="14" fill="#5670a0"><path d="M10 0h3v3h-3zM5 5h3v3H5zM10 5h3v3h-3zM0 10h3v3H0zM5 10h3v3H5zM10 10h3v3h-3z"/></svg>
  </div>
</section>

<footer class="taskbar">
  <svg class="start" viewBox="0 0 16 16" fill="#fff"><path d="M0 2l7-1v7H0zM8 1l8-1v8H8zM0 9h7v6l-7-1zM8 9h8v7l-8-1z"/></svg><i class="tsep"></i>
  <div class="apps">
    <button><svg viewBox="0 0 24 24"><path d="M1 1h22v22H1z" fill="#2a3fc0"/><path d="M7 1h10v8H7z" fill="#cdd3e0"/><path d="M13 2h3v5h-3z" fill="#223"/><path d="M3 11h18v12H3z" fill="#f6dede"/><path d="M5 14h14M5 17h14" stroke="#d88"/></svg>Ad...</button>
    <button><svg viewBox="0 0 24 24"><rect x="1" y="1" width="22" height="22" rx="5" fill="#1684f8"/><path d="M6 5l11 5c2 1 1 4-1 6l-5 5 1-5-3-1z" fill="#fff"/></svg>钉钉</button>
    <button><svg viewBox="0 0 26 24"><path d="M1 10C3 2 20 0 24 9c0 4-5 9-12 13C6 18 1 14 1 10z" fill="#f2b65a"/><path d="M12 21L5 6M12 21L10 3M12 21l4-18M12 21l9-15" stroke="#fbe3a8"/><path d="M17 9l2 5 5 0-4 3 2 6-5-4-4 3 1-5-4-3h5z" fill="#e8842a"/></svg>兴森...</button>
    <button><svg><use href="#fox"/></svg>Fox...</button>
    <button><svg><use href="#gen"/></svg>Gen...</button>
    <button><svg><use href="#xapp"/></svg>Engi...</button>
    <button><svg><use href="#xapp"/></svg>Pro...</button>
    <button><svg><use href="#xapp"/></svg>Gra...</button>
    <button><svg><use href="#xapp"/></svg>Dial...</button>
    <button><svg><use href="#xapp"/></svg>Drill...</button>
    <button><svg><use href="#xapp"/></svg>4s7...</button>
    <button><svg><use href="#xapp"/></svg>Job ...</button>
    <button><svg><use href="#xapp"/></svg>Gra...</button>
    <button><svg viewBox="0 0 24 24"><path d="M4 2h13l5 4-2 7H10M6 6h8M3 11h9M1 16h12l-5 6" fill="none" stroke="#1aa060" stroke-width="3"/></svg>EDS...</button>
    <button><svg viewBox="0 0 24 24"><path d="M3 0h18v24H3z" fill="#5d7c96"/><path d="M4 1h16v5H4z" fill="#3ec1f0"/><path d="M5 9h4v3H5zM10 9h4v3h-4zM5 14h4v3H5zM10 14h4v3h-4zM5 19h4v3H5zM10 19h4v3h-4zM15 9h4v3h-4z" fill="#dfe8ef"/><path d="M15 14h4v8h-4z" fill="#1c5a94"/></svg>计算...</button>
    <button class="or"><svg viewBox="0 0 24 24"><rect x="3" y="1" width="18" height="22" rx="2" fill="#bfeaf8"/><path d="M5 5h14M5 9h14M5 13h14M5 17h14" stroke="#2a9ad0" stroke-width="2"/></svg>制作...</button>
    <button><svg><use href="#xls"/></svg>4S7...</button>
    <button class="cur"><svg><use href="#xls"/></svg>4S7...</button>
    <button><svg><use href="#xls"/></svg>4S7...</button>
    <button><svg viewBox="0 0 24 24"><path d="M6 1h12l5 5v17H6z" fill="#eef3fb" stroke="#9fb4d6"/><path d="M9 12h11M9 15h11M9 18h11" stroke="#5b7fc8"/><path d="M1 4l12-2v9L1 11z" fill="#eef" stroke="#4a66c0"/><path d="M3 5l2 5 2-4 2 4 2-5" fill="none" stroke="#2a4ab0" stroke-width="1.500"/></svg>S79...</button>
    <button><svg viewBox="0 0 24 24"><path d="M0 1h24v20H0z" fill="#4fa0e8"/><path d="M2 3h20v9H2z" fill="#bfe6fb"/><path d="M2 19v-5c6-4 12 2 20-2v7z" fill="#164a78"/></svg>4S7...</button>
    <button><svg><use href="#gen"/></svg>CA...</button>
  </div>
  <div class="cpu">30℃<br>CPU温度</div>
  <svg class="up" width="14" height="10" fill="none" stroke="#fff" stroke-width="1.500"><path d="M1 8l6-6 6 6"/></svg>
  <svg class="ti" viewBox="0 0 16 16"><path d="M1 1l14 14M15 1L1 15" stroke="#eee" stroke-width="4"/><path d="M1 1l14 14M15 1L1 15" stroke="#9a1fa0" stroke-width="2.500"/></svg>
  <svg class="ti"><use href="#fox"/></svg>
  <span class="zh">中</span>
  <svg class="ti" viewBox="0 0 16 16"><path d="M2 1l12-1 2 13-13 3z" fill="#1fb03a"/><path d="M12 4H6v4h5v4H4" fill="none" stroke="#fff" stroke-width="2.500"/></svg>
  <div class="clock">12:49<br>2025/3/5</div>
  <svg class="noti" viewBox="0 0 26 26"><path d="M1 2h17v14H7l-4 4v-4H1z" fill="#fff"/><path d="M4 6h11M4 9h11M4 12h8" stroke="#111"/><circle cx="17" cy="17" r="8" fill="#444" stroke="#aaa"/><path d="M15 14l3-1v8" fill="none" stroke="#fff" stroke-width="1.500"/></svg>
</footer>
</body>
</html>
```

FILE: styles.css
```css
* { box-sizing: border-box; }
html, body { height: 100%; }
body { margin: 0; display: flex; flex-direction: column; background: #000; overflow: hidden; position: relative;
  font-family: "Open Sans", "Noto Sans CJK SC", sans-serif; color: #000; text-spacing-trim: space-all; }
button, input, select { font: inherit; color: inherit; margin: 0; padding: 0; border: 0; background: none; border-radius: 0; }
svg { display: block; flex: none; }
ul { list-style: none; margin: 0; padding: 0; }
.defs { position: absolute; width: 0; height: 0; }

/* editor title and menu */
.titlebar { height: 23px; flex: none; background: #fff; display: flex; align-items: center; padding: 0 4px 0 1px; gap: 5px; color: #999; font-size: 16px; line-height: 23px; white-space: nowrap; }
.tico { width: 17px; height: 17px; border: 1px solid #333; }
.wctl { margin-left: auto; margin-right: 16px; }
.menubar { height: 57px; flex: none; display: flex; background: #9adada; border-top: 2px solid #5a8a8a; border-bottom: 1px solid #c8f4f4; font-family: "Liberation Serif", serif; font-weight: bold; font-size: 14px; }
.menus { flex: 1; display: flex; align-items: center; gap: 18px; padding: 0 14px 2px; border: 2px solid #c8f4f4; border-right-color: #4f8080; border-bottom-color: #4f8080; }
.menus a { color: #000; text-decoration: none; }
.menus u { text-underline-offset: 4px; }
.menus .help { margin-left: auto; }
.brand { width: 414px; display: flex; border-left: 2px solid #4f8080; padding: 2px 4px 0 5px; }
.logo { display: flex; align-items: center; color: #000080; font: italic bold 32px/44px "Liberation Sans", sans-serif; height: 46px; }
.product { width: 140px; display: flex; flex-direction: column; align-items: center; font-size: 24px; line-height: 26px; white-space: nowrap; }
.product i { font-size: 15px; line-height: 24px; }
.date { flex: 1; display: flex; flex-direction: column; align-items: center; font: italic bold 15px/15px "Liberation Mono", monospace; white-space: nowrap; padding-top: 2px; margin-left: 3px; }
.date em { width: 10px; height: 9px; margin: 6px 20px 0 0; align-self: flex-end; border: solid #f00; border-width: 0 4px; }

/* editor body */
.work { flex: 1; min-height: 0; display: flex; }
.side { width: 154px; flex: none; display: flex; flex-direction: column; background: #52ceb0; border: solid #3c8f7c; border-width: 0 0 0 2px; border-right: 1px solid #a8ecd8; font: bold 12px/14px "Liberation Mono", monospace; }
.jobbox { margin: 3px 0 0; border: 1px solid #000; }
.jobline, .jobbtn button { font-size: 15px; line-height: 17px; font-weight: normal; -webkit-text-stroke: 0.3px #000; }
.jobline { background: #9adada; height: 18px; padding-left: 2px; white-space: nowrap; }
.jobline + .jobline { border-top: 1px solid #000; }
.jobbtn { margin: 2px 0 0; border: 1px solid #000; padding: 2px; height: 27px; }
.jobbtn button { width: 100%; height: 100%; background: #9adada; border: 2px solid #c8f8f8; border-right-color: #4f8080; border-bottom-color: #4f8080; text-align: left; padding-left: 1px; }
.well { flex: 1; margin-top: 3px; border: solid #2c7466; border-width: 2px 0 0 3px; border-bottom: 2px solid #a8ecd8; }
.layers { width: 120px; border: 1px solid #000; outline: 1px solid #a8ecd8; padding: 1px 1px 9px; margin: 1px 0 0 1px; display: flex; flex-direction: column; gap: 3px; }
.layers ul { background: #000; padding: 1px 2px 1px 1px; }
.layers li { display: flex; height: 16px; gap: 2px; padding: 1px 0; }
.layers i { width: 14px; background: #fff; outline: 2px solid #000; outline-offset: -4px; }
.layers i.on { border: 4px solid #00c; outline-width: 2px; }
.layers s { width: 14px; background: #000; }
.layers s.red { background: #f00; }
.layers s.grn { background: #459a00; }
.layers b { flex: 1; min-width: 0; overflow: hidden; background: #9adada; padding-left: 1px; line-height: 14px; white-space: nowrap; display: flex; justify-content: space-between; }
.layers b.w { background: #fff; } .layers b.g { background: #00a47c; } .layers b.o { background: #ffc64e; } .layers b.d { background: #9ab4be; } .layers b.l { background: #d8d8d8; }
.layers small { font-size: 8px; }
.selected { margin: 1px 0 2px; height: 20px; border: 1px solid #000; background: #ffc64e; padding-left: 2px; line-height: 18px; }
.canvas { flex: 1; min-width: 0; height: 100%; }
.canvas text { fill: #fff; stroke: none; font: bold 15px "Liberation Mono", monospace; }
.right { width: 162px; flex: none; display: flex; flex-direction: column; border-right: 2px solid #9adada; }
.tools { display: grid; grid-template-columns: repeat(4, 39px); grid-auto-rows: 39px; gap: 1px; padding: 1px 0 2px 0; background: #111; border-bottom: 2px solid #9adada; border-top: 1px solid #3c7a6a; flex: none; }
.tools button { background: #9adada; border: 3px solid #c0f0ee; border-right-color: #4f8f8c; border-bottom-color: #4f8f8c; overflow: hidden; }
.tools svg { width: 39px; height: 39px; margin: -3px; fill: none; stroke: #000; stroke-width: 1; }
.gray { border-color: #777; border-top-width: 0; padding: 1px 0; }
.gray button { background: #ccc; border-color: #eee #777 #777 #eee; }
.gray .wt { background: #fff; }
.gray .or { background: #ffc64e; border-color: #ffe0a0 #a87818 #a87818 #ffe0a0; }
.tools .redb { border-color: #c81818; }
.mini { width: 100%; flex: 1; min-height: 0; }
.coords { height: 43px; flex: none; background: #52ceb0; border-top: 2px solid #2c7466; font: bold 15px/15px "Liberation Mono", monospace; padding: 5px 0 0 1px; white-space: nowrap; }

/* command and status lines */
.cmdbar { height: 34px; flex: none; display: flex; background: #ffffcc; border: solid #000; border-width: 2px 0 1px; font: bold 12px/13px "Liberation Mono", monospace; }
.c1 { width: 32px; flex: none; border: 1px solid #000; display: grid; place-items: center; background: #ffffcc; }
.c1.gr { border: 2px solid #52ceb0; outline: 1px solid #000; outline-offset: -1px; }
.c1 svg { width: 22px; height: 22px; fill: none; stroke: #000; }
.xy { width: 46px; line-height: 32px; padding-left: 2px; white-space: nowrap; }
.xyin { width: 173px; margin: 1px; border: 2px solid #94946c; border-right-color: #d8d8aa; border-bottom-color: #d8d8aa; background: #ffffcc; }
.msg { flex: 1; padding: 3px 2px; white-space: nowrap; overflow: hidden; border-left: 1px solid #000; }
.mm { width: 80px; background: #52ceb0; border: 2px solid #a8ecd8; outline: 1px solid #000; outline-offset: -1px; display: flex; align-items: center; justify-content: space-between; padding: 0 8px 0 12px; font-family: "Liberation Mono", monospace; font-size: 14px; }
.mm i { width: 12px; height: 7px; border: 2px solid #a8ecd8; border-bottom-color: #2c7466; border-right-color: #2c7466; }
.statusline { height: 33px; flex: none; background: #5a9a98; padding: 2px; border-bottom: 2px solid #9adada; }
.statusline div { height: 100%; background: #b0fdfd; border: 2px solid #c8ffff; outline: 1px solid #000; border-bottom-color: #70a8a8; border-right-color: #70a8a8; }

/* measure popup */
.popup { position: absolute; left: 1867px; top: 323px; width: 125px; background: #52ceb0; border-right: 7px solid #000; font: bold 15px/27px "Liberation Mono", monospace; }
.popup header { height: 30px; background: #fff; display: flex; justify-content: flex-end; align-items: center; gap: 20px; padding-right: 9px; color: #999; font: 17px "Open Sans", sans-serif; white-space: nowrap; }
.popup h4 { margin: 0; font-size: inherit; line-height: 15px; border: 1px solid #000; border-left: 0; background: #9adada; padding-left: 17px; }
.popup > button { display: block; width: 100%; height: 29px; text-align: left; padding-left: 13px; background: #9adada; border: solid #000; border-width: 0 2px 2px 0; white-space: nowrap; }
.pfoot { margin-top: 32px; border-top: 1px solid #000; padding: 2px 3px 3px 0; border-bottom: 1px solid #222; }
.pfoot button { display: block; width: 100%; height: 24px; line-height: 20px; background: #9adada; border: 2px solid #c8f8f8; border-right-color: #4f8080; border-bottom-color: #4f8080; text-align: left; }

/* spreadsheet window */
.excel { position: absolute; left: 710px; right: 163px; top: 231px; bottom: 41px; background: #c5dbf8; display: flex; flex-direction: column; font: 15px/20px "Noto Sans CJK SC", sans-serif; color: #15428b; box-shadow: 3px 0 8px rgba(0,0,0,.5); }
.etitle { height: 34px; flex: none; background: #fff; display: flex; align-items: center; position: relative; font: 16px/20px "Open Sans", "Noto Sans CJK SC", sans-serif; padding-left: 48px; }
.orb { position: absolute; left: 4px; top: 8px; width: 47px; height: 47px; z-index: 2; }
.qat { height: 25px; width: 123px; margin-top: 3px; border: 1px solid #b9bec8; border-radius: 0 13px 13px 0; display: flex; align-items: center; gap: 8px; padding-left: 18px; background: #fbfcfe; }
.qat i { border: 4px solid transparent; border-top: 5px solid #1c3d78; border-bottom: 0; margin-left: -2px; }
.qat i.dim { border-top-color: #aaa; }
.more { margin: 3px 0 0 9px; }
.etext { margin: 0 auto; color: #000; white-space: nowrap; padding-right: 62px; padding-bottom: 2px; }
.ectl { margin-right: 16px; margin-bottom: 4px; }
.etabs { height: 30px; flex: none; background: #bfdbff; display: flex; padding: 1px 0 0 57px; align-items: stretch; }
.etabs button { width: 60px; padding-bottom: 1px; }
.etabs .act { width: 83px; margin: 0 4px 0 3px; background: #e6effb; border: 1px solid #8db2e3; border-bottom: 0; border-radius: 4px 4px 0 0; }
.etabs button:nth-child(4) { width: 59px; }
.etabs svg { margin: 5px 8px 0 auto; }
.ribbon { height: 121px; flex: none; margin: 0 2px 0 1px; border: 1px solid #8db2e3; border-bottom: 2px solid #8fc3dc; border-radius: 4px; background: linear-gradient(#dbe6f4, #c9d9ed 16%, #c9d9ed 30%, #e4f2fc); padding: 1px 2px 2px 1px; display: flex; gap: 3px; }
.grp { height: 116px; border: 1px solid #a3c0e2; border-radius: 3px; display: flex; flex-direction: column; background: linear-gradient(#dfe8f4, #cddbec 15%, #c9d9ed 40%, #dde9f6); }
.g1 { width: 131px; } .g2 { width: 418px; } .g3 { width: 185px; } .g4 { width: 139px; } .g5 { width: 182px; }
.gb { height: 92px; display: flex; }
.cap { flex: 1; background: #c2d8f1; color: #3e6aaa; text-align: center; position: relative; line-height: 22px; }
.lc { padding-right: 22px; }
.ln { position: absolute; right: 4px; top: 4px; width: 12px; height: 12px; }
.big { display: flex; flex-direction: column; align-items: center; white-space: nowrap; }
.big svg { width: 40px; height: 40px; margin: 3px 0 4px; }
.big svg.m { width: 32px; height: 32px; margin: 8px 0 7px; }
.big i { border: 3px solid transparent; border-top: 4px solid #5d7fae; border-bottom: 0; margin-top: 7px; }
.g1 .big { width: 56px; }
.g2 .gb { gap: 5px; padding-left: 5px; }
.narrow { width: 44px; }
.smalls { display: flex; flex-direction: column; padding-top: 1px; }
.smalls button { display: flex; align-items: center; gap: 3px; height: 26px; white-space: nowrap; }
.smalls svg { width: 20px; height: 20px; }
.smalls i { border: 3px solid transparent; border-top: 4px solid #5d7fae; border-bottom: 0; margin-left: 4px; }
.tight svg { width: 16px; height: 16px; margin-right: 2px; }
.smalls :disabled { color: #8d96a5; }
.smalls :disabled i { border-top-color: #a8b0bc; }
.g5 .gb { padding-left: 8px; gap: 9px; }
.rows { flex-direction: column; }
.fr { display: flex; align-items: center; height: 30px; padding: 0 4px 0 7px; }
.fr svg { width: 16px; height: 16px; margin-right: 6px; }
.fr select, .spin { margin-left: auto; width: 93px; height: 29px; border: 1px solid #b3cbe8; background: #eaf2fb; color: #000; padding-left: 2px; }
.fr select { appearance: none; background: linear-gradient(45deg, transparent 50%, #5d7fae 50%) 80px 12px / 4px 4px no-repeat, linear-gradient(-45deg, transparent 50%, #5d7fae 50%) 84px 12px / 4px 4px no-repeat, #eaf2fb; }
.spin { width: 82px; display: flex; align-items: center; justify-content: space-between; }
.fr .spin svg { width: 8px; height: 20px; margin-right: 4px; }
.spin input { width: 50px; font-family: "Open Sans", sans-serif; font-size: 16px; }
.ck { width: 69px; padding: 8px 0 0 4px; display: flex; flex-direction: column; gap: 8px; white-space: nowrap; }
.ck.sep { border-left: 1px solid #a3b8d8; margin: 6px 0; padding-top: 2px; }
.ck span { line-height: 21px; }
.ck label { display: flex; align-items: center; gap: 6px; }
.ck input { appearance: none; width: 16px; height: 16px; margin-left: 2px; background: #f0f3f7; border: 1px solid #a9b9cf; outline: 1px solid #fff; outline-offset: -3px; }
.ck input:checked { background: #fff; }
.ck input:checked::after { content: "✓"; display: block; font: bold 14px/14px "DejaVu Sans", sans-serif; color: #33518f; text-align: center; }
.secwrap { height: 51px; flex: none; background: #c5dbf8; padding: 6px 6px 3px 3px; display: flex; gap: 8px; }
.sec { flex: 1; border: 1px solid #9fbde0; background: linear-gradient(#fdfeff, #e9f3fc); display: flex; align-items: center; }
.sec svg { width: 14px; height: 18px; margin: 0 14px 0 5px; }
.sec span { margin-left: 12px; }
.sec button { width: 80px; height: 23px; border: 1px solid #9ab8dc; background: #fff; margin-left: 9px; line-height: 20px; }
.secwrap .x { align-self: flex-start; font: bold 15px/18px "Liberation Sans", sans-serif; color: #778; width: 12px; }
.fbar { height: 22px; flex: none; display: flex; border: 1px solid #8aa8cc; border-bottom-color: #7a9cc4; color: #000; background: #fff; }
.name { width: 159px; display: flex; align-items: center; justify-content: flex-end; gap: 62px; padding-right: 6px; font: 14px "Liberation Mono", monospace; }
.name i { border: 4px solid transparent; border-top: 5px solid #000; border-bottom: 0; }
.fx { width: 76px; background: linear-gradient(90deg, #e8f1fd, #b9cfee); border-left: 1px solid #8aa8cc; border-radius: 9px 0 0 9px; display: flex; align-items: center; justify-content: space-between; padding: 0 5px; font: italic bold 16px/18px "Liberation Serif", serif; color: #445; }
.fx i { width: 8px; height: 8px; border-radius: 4px; background: #b4bcc8; }
.fx sub { font-size: 11px; line-height: 0; }
.fin { flex: 1; padding-left: 12px; font: 14px "Liberation Mono", "Noto Sans CJK SC", monospace; border-left: 1px solid #8aa8cc; min-width: 0; }
.exp { width: 16px; background: #d4e2f4; border: 1px solid #7a9cc4; display: grid; place-items: center; }
.exp svg { width: 10px; height: 12px; }
.gridwrap { flex: 1; min-height: 0; display: flex; padding-top: 3px; }
.gridclip { flex: 1; min-width: 0; overflow: hidden; position: relative; background: #fff; }
.sheet { width: 100%; table-layout: fixed; border-collapse: separate; border-spacing: 0; color: #000; font: 16px/18px "Liberation Serif", "Noto Sans CJK SC", serif; }
.k0 { width: 35px; } .kA { width: 111px; } .kB { width: 44px; } .kC { width: 143px; } .kD { width: 93px; } .kE { width: 81px; } .kF { width: 72px; } .kG { width: 49px; } .kH { width: 89px; } .kJ { width: 141px; } .kK { width: 20px; }
.sheet th, .sheet td { padding: 0; height: 30px; overflow: hidden; white-space: nowrap; text-align: center; }
.sheet td { border: solid #000; border-width: 0 1px 1px 0; }
.sheet th { font-weight: normal; color: #27405f; font-size: 16px; background: #e4ecf7; border: solid #9eb6ce; border-width: 0 1px 1px 0; }
.sheet tbody th { vertical-align: bottom; line-height: 16px; }
.sheet thead th { height: 19px; background: linear-gradient(#f5f8fc, #d5dde9); }
.sheet thead .corner { background: linear-gradient(135deg, #a9c4e9 55%, #dde8f6 55%, #dde8f6 90%, #a9c4e9 90%); }
.sheet thead .hot { background: #f4bd68; }
.sheet tbody .hot { background: #ffd58d; }
.sheet .h59 > * { height: 59px; } .sheet .h26 > * { height: 26px; } .sheet .h47 > * { height: 47px; } .sheet .h29 > * { height: 29px; }
.ttl { display: flex; align-items: center; gap: 104px; padding-left: 430px; height: 29px; }
.ttl b { font: bold 25px/28px "Noto Sans CJK SC", sans-serif; }
.ttl span { font: bold 15px/20px "Liberation Mono", monospace; padding-top: 8px; }
.f17 td { font-size: 17px; font-weight: 700; }
.sheet .b { font-weight: 700; }
.sheet .mono { font-family: "Liberation Mono", monospace; font-size: 15px; }
.sheet .sa { text-align: left; padding-left: 3px; font-size: 16px; font-weight: 700; }
.sheet .sb { font: 15px/22px "Noto Sans CJK SC", sans-serif; color: #1414d8; }
.sb b { color: #000; line-height: 20px; }
.sheet .sc { vertical-align: top; padding-top: 172px; font-size: 16px; font-weight: 700; }
.sheet .n { font-size: 18px; font-weight: 400; -webkit-text-stroke: 0.4px #000; }
.f13 td { font: 13px/18px "Noto Sans CJK SC", sans-serif; }
.f13 .n { font-family: "Liberation Serif", serif; }
.f14 td { font-size: 14px; font-weight: 700; }
.sheet .left { text-align: left; padding-left: 3px; }
.rd { color: #e00000; } .bl { color: #1414d8; }
.sheet kbd { font: bold 12px/14px "Liberation Mono", monospace; }
.sheet .sc kbd { font-size: 14px; }
.two { line-height: 16px; }
.yel { background: #ff0; } .amb { background: #ffc000; } .pale { background: #e8f0dc; }
.note { position: relative; }
.note::after { content: ""; position: absolute; right: 0; top: 0; border: solid transparent; border-width: 0 0 5px 5px; border-top: 5px solid #c01010; border-bottom: 0; }
.sheet .lnk { background: #92d050; text-align: left; padding: 3px 0 0 3px; font: 14px/18px "Liberation Mono", "Noto Sans CJK SC", monospace; }
.lnk a { color: #7a1a6a; }
.sel { outline: 1px solid #fff; outline-offset: -1px; box-shadow: inset 0 0 0 3px #444; }
.mark { position: absolute; left: 141px; right: 67px; top: 463px; height: 51px; border: 4px solid #f8f808; box-shadow: 0 3px 5px rgba(0,0,0,.6), inset 0 3px 8px rgba(0,0,0,.6); }
.vs { width: 16px; flex: none; background: #789bcb; display: flex; flex-direction: column; align-items: center; gap: 7px; border-left: 1px solid #9ab8dc; }
.vs svg { width: 10px; height: 6px; fill: #33507f; }
.split { width: 13px; height: 7px; margin-top: 1px; background: #fff; border: 1px solid #567cb0; }
.vth { width: 14px; height: 165px; margin-top: -2px; border: 1px solid #7088aa; border-radius: 2px; background: repeating-linear-gradient(#667 0 1px, transparent 1px 3px) center / 8px 9px no-repeat, linear-gradient(90deg, #e2eaf6, #b7c8e0); }
.vs .dn { margin-top: auto; margin-bottom: 5px; }
.sheets { height: 17px; flex: none; background: #b9d1f0; border-bottom: 1px solid #567cb0; display: flex; font: 14px/16px "Liberation Serif", "Noto Sans CJK SC", serif; padding-left: 5px; }
.nav { margin: 2px 3px 0 0; }
.sheets button { width: 37px; background: linear-gradient(115deg, #7f9fcb 0 2px, transparent 2px); padding-right: 3px; white-space: nowrap; }
.sheets .cur { width: 48px; background: #fff; padding: 0 0 2px; font-size: 15px; }
.sheets .w2 { width: 44px; }
.sheets .new svg { width: 15px; height: 15px; margin-left: 6px; }
.hs { flex: 1; display: flex; align-items: center; gap: 6px; background: #789bcb; padding-right: 18px; }
.hs i { width: 6px; height: 14px; background: #fff; border: 1px solid #567cb0; }
.hs > svg { width: 6px; height: 10px; fill: #33507f; }
.hth { width: 320px; height: 15px; border: 1px solid #7088aa; border-radius: 2px; background: repeating-linear-gradient(90deg, #667 0 1px, transparent 1px 2px) center / 8px 8px no-repeat, linear-gradient(#eaf0f8, #bccbe0); margin-right: auto; }
.estatus { height: 28px; flex: none; background: linear-gradient(#dceafc, #bfd8f8 30%, #aecbf2 55%, #d5e6fb); display: flex; align-items: center; padding-right: 2px; }
.rdy { padding: 0 8px 0 7px; border-right: 1px solid #9ab8dc; line-height: 26px; }
.views { margin-left: auto; display: flex; height: 24px; border: 1px solid #8fb0dc; }
.views button { width: 23px; display: grid; place-items: center; }
.views .on { background: #ffd58d; }
.views svg { width: 20px; height: 16px; }
.pct { width: 58px; text-align: center; font: 16px "Open Sans", sans-serif; }
.rnd { width: 20px; height: 20px; border: 1px solid #667; border-radius: 10px; background: #e8eef8; font: bold 18px/16px "Liberation Sans", sans-serif; color: #445; }
.estatus input { appearance: none; width: 127px; height: 20px; background: linear-gradient(#7f97bd, #7f97bd) center / 100% 1px no-repeat; }
.estatus input::-webkit-slider-thumb { appearance: none; width: 9px; height: 17px; background: #e8eef8; border: 1px solid #556; border-radius: 1px 1px 4px 4px; }
.gripper { margin: 8px 0 0 8px; }

/* taskbar */
.taskbar { height: 40px; flex: none; background: #101010; color: #fff; display: flex; align-items: center; font: 12px/19px "Open Sans", "Noto Sans CJK SC", sans-serif; padding-right: 18px; white-space: nowrap; }
.start { width: 17px; height: 17px; margin: 0 21px 0 16px; }
.tsep { width: 4px; height: 17px; border: solid #444; border-width: 0 1px; margin-right: 15px; }
.apps { flex: 1; display: flex; height: 100%; }
.apps button { flex: 1 1 0; min-width: 0; display: flex; align-items: center; gap: 4px; padding-left: 4px; overflow: hidden; background: linear-gradient(#76b9ed, #76b9ed) 2px 100% / 67px 2px no-repeat; font-size: 13px; }
.apps svg { width: 24px; height: 24px; }
.apps .or { background: linear-gradient(#ff8a1c, #ff8a1c) 0 100% / 100% 2px no-repeat, #a0561e; }
.apps .cur { background: linear-gradient(#76b9ed, #76b9ed) 0 100% / 100% 2px no-repeat, #333; }
.cpu { width: 78px; text-align: center; }
.up { margin-right: 9px; }
.ti { width: 17px; height: 17px; margin-right: 7px; }
.zh { font-size: 14px; margin-right: 12px; }
.clock { width: 80px; text-align: center; }
.noti { width: 26px; height: 26px; margin-left: 8px; }
```
